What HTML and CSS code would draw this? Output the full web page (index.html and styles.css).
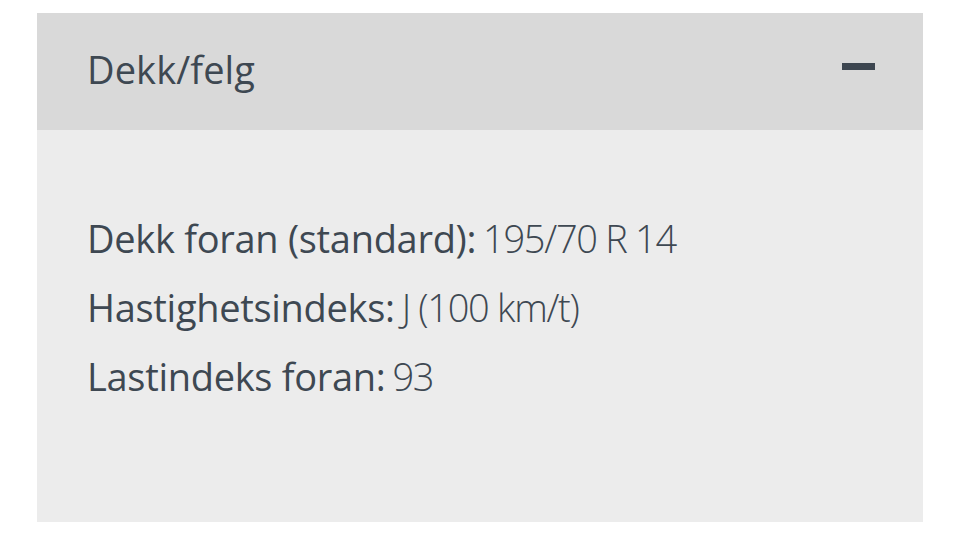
FILE: index.html
```html
<!DOCTYPE html>
<html lang="no">
<head>
    <meta charset="UTF-8">
    <meta name="viewport" content="width=device-width, initial-scale=1.0">
    <title>Dekk/felg</title>
    <link rel="stylesheet" href="styles.css">
</head>
<body>
    <div class="accordion">
        <div class="accordion-header">
            <h2>Dekk/felg</h2>
            <span class="toggle-icon"></span>
        </div>
        <div class="accordion-body">
            <p><span class="label">Dekk foran (standard):</span> <span class="value">195/70 R 14</span></p>
            <p><span class="label">Hastighetsindeks:</span> <span class="value">J (100 km/t)</span></p>
            <p><span class="label">Lastindeks foran:</span> <span class="value">93</span></p>
        </div>
    </div>
</body>
</html>
```
FILE: styles.css
```css
body {
    margin: 0;
    padding: 13px 37px 14px 37px;
    background: #fff;
    font-family: 'Open Sans', sans-serif;
    color: #3e4852;
}

.accordion {
    background-color: #ececec;
}

.accordion-header {
    height: 117px;
    padding: 0 48px 5px 50px;
    box-sizing: border-box;
    background-color: #d9d9d9;
    display: flex;
    align-items: center;
    justify-content: space-between;
}

.accordion-header h2 {
    margin: 0;
    font-size: 38px;
    font-weight: 400;
    letter-spacing: 0.1px;
}

.toggle-icon {
    width: 33px;
    height: 7px;
    background-color: #3d4650;
    margin-top: -5px;
}

.accordion-body {
    height: 392px;
    padding: 74px 50px 0 50px;
    box-sizing: border-box;
}

.accordion-body p {
    margin: 0;
    font-size: 38px;
    line-height: 69px;
}

.label {
    font-weight: 500;
    letter-spacing: -0.3px;
    margin-right: -3px;
}

.value {
    font-weight: 300;
    letter-spacing: -1.3px;
}
```
